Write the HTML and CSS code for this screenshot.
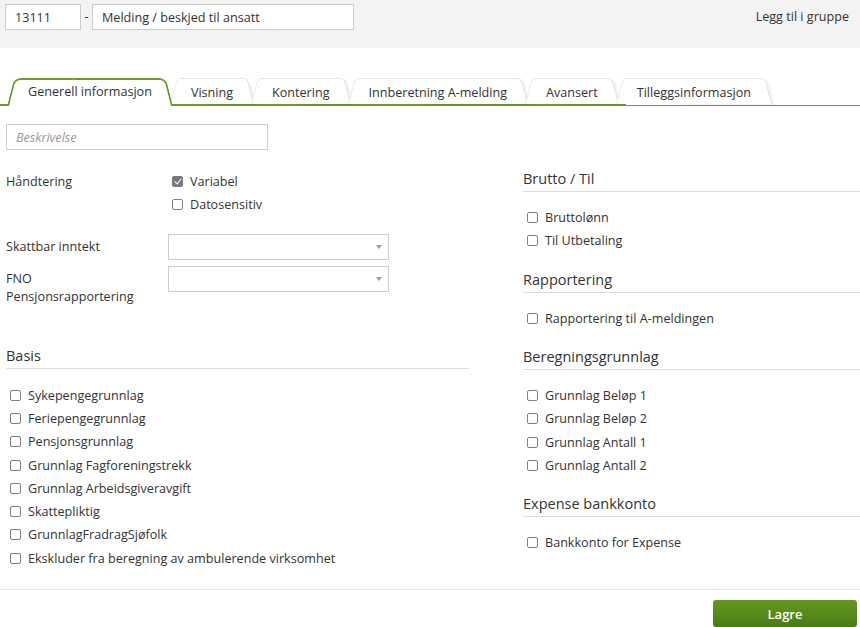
FILE: index.html
```html
<!DOCTYPE html>
<html lang="no">
<head>
    <meta charset="UTF-8">
    <meta name="viewport" content="width=device-width, initial-scale=1.0">
    <title>Lønnsart - Melding / beskjed til ansatt</title>
    <link rel="stylesheet" href="styles.css">
</head>
<body>
    <div class="header">
        <input class="text-input code-input" type="text" value="13111">
        <span class="dash">-</span>
        <input class="text-input name-input" type="text" value="Melding / beskjed til ansatt">
        <a class="group-link" href="#">Legg til i gruppe</a>
    </div>

    <div class="tabbar">
        <div class="tab active">Generell informasjon</div>
        <div class="tab">Visning</div>
        <div class="tab">Kontering</div>
        <div class="tab">Innberetning A-melding</div>
        <div class="tab">Avansert</div>
        <div class="tab">Tilleggsinformasjon</div>
    </div>

    <div class="content">
        <input class="text-input desc-input" type="text" placeholder="Beskrivelse">

        <div class="columns">
            <div class="col-left">
                <div class="field-row">
                    <div class="field-label">Håndtering</div>
                    <div class="check-list">
                        <label class="check"><span class="box checked"></span>Variabel</label>
                        <label class="check"><span class="box"></span>Datosensitiv</label>
                    </div>
                </div>

                <div class="field-row select-row first-select">
                    <div class="field-label">Skattbar inntekt</div>
                    <div class="select"><span class="arrow"></span></div>
                </div>
                <div class="field-row select-row">
                    <div class="field-label">FNO Pensjonsrapportering</div>
                    <div class="select"><span class="arrow"></span></div>
                </div>

                <div class="section basis">
                    <h3 class="section-title">Basis</h3>
                    <div class="check-list">
                        <label class="check"><span class="box"></span>Sykepengegrunnlag</label>
                        <label class="check"><span class="box"></span>Feriepengegrunnlag</label>
                        <label class="check"><span class="box"></span>Pensjonsgrunnlag</label>
                        <label class="check"><span class="box"></span>Grunnlag Fagforeningstrekk</label>
                        <label class="check"><span class="box"></span>Grunnlag Arbeidsgiveravgift</label>
                        <label class="check"><span class="box"></span>Skattepliktig</label>
                        <label class="check"><span class="box"></span>GrunnlagFradragSjøfolk</label>
                        <label class="check"><span class="box"></span>Ekskluder fra beregning av ambulerende virksomhet</label>
                    </div>
                </div>
            </div>

            <div class="col-right">
                <div class="section">
                    <h3 class="section-title">Brutto / Til</h3>
                    <div class="check-list">
                        <label class="check"><span class="box"></span>Bruttolønn</label>
                        <label class="check"><span class="box"></span>Til Utbetaling</label>
                    </div>
                </div>
                <div class="section">
                    <h3 class="section-title">Rapportering</h3>
                    <div class="check-list">
                        <label class="check"><span class="box"></span>Rapportering til A-meldingen</label>
                    </div>
                </div>
                <div class="section">
                    <h3 class="section-title">Beregningsgrunnlag</h3>
                    <div class="check-list">
                        <label class="check"><span class="box"></span>Grunnlag Beløp 1</label>
                        <label class="check"><span class="box"></span>Grunnlag Beløp 2</label>
                        <label class="check"><span class="box"></span>Grunnlag Antall 1</label>
                        <label class="check"><span class="box"></span>Grunnlag Antall 2</label>
                    </div>
                </div>
                <div class="section">
                    <h3 class="section-title">Expense bankkonto</h3>
                    <div class="check-list">
                        <label class="check"><span class="box"></span>Bankkonto for Expense</label>
                    </div>
                </div>
            </div>
        </div>
    </div>

    <div class="footer">
        <button class="save-btn">Lagre</button>
    </div>
</body>
</html>
```

FILE: styles.css
```css
body {
    margin: 0;
    padding: 0;
    font-family: "Open Sans", "Liberation Sans", sans-serif;
    font-size: 12.6px;
    color: #333;
    background-color: white;
    overflow: hidden;
}

.text-input {
    box-sizing: border-box;
    height: 26px;
    margin: 0;
    border: 1px solid #ccc;
    background-color: white;
    font-family: "Open Sans", sans-serif;
    font-size: 12.6px;
    color: #333;
    padding: 0 9px;
    outline: none;
}

.header {
    display: flex;
    align-items: flex-start;
    height: 48px;
    box-sizing: border-box;
    padding: 4px 11px 0 5px;
    background-color: #f3f3f3;
}

.code-input {
    width: 76px;
}

.dash {
    width: 11px;
    text-align: center;
    line-height: 26px;
}

.name-input {
    width: 262px;
}

.group-link {
    margin-left: auto;
    line-height: 26px;
    color: #333;
    text-decoration: none;
}

/* tabs */
.tabbar {
    display: flex;
    align-items: flex-start;
    height: 27px;
    margin-top: 30px;
    padding-left: 7px;
    border-bottom: 1px solid #6b9a2b;
    background: linear-gradient(#6b9a2b, #6b9a2b) no-repeat 0 100% / 626px 1px;
}

.tab {
    position: relative;
    z-index: 1;
    height: 26px;
    box-sizing: border-box;
    padding: 4px 21px 0;
    margin-right: -3px;
    line-height: 22px;
    white-space: nowrap;
    color: #333;
}

.tab::before,
.tab::after {
    content: '';
    position: absolute;
    top: 0;
    bottom: 0;
    width: 55%;
    z-index: -1;
    background-color: white;
    border-top: 1px solid #e6e6e6;
    transform-origin: bottom;
}

.tab::before {
    left: 0;
    border-left: 1px solid #e6e6e6;
    border-radius: 5px 0 0 0;
    transform: skewX(-14deg);
}

.tab::after {
    right: 0;
    border-right: 1px solid #dcdcdc;
    border-radius: 0 5px 0 0;
    transform: skewX(14deg);
    box-shadow: 2px 1px 2px rgba(0, 0, 0, 0.06);
}

.tab.active {
    z-index: 2;
    height: 28px;
    padding-top: 3px;
}

.tab.active::before,
.tab.active::after {
    border-top: 2px solid #6b9a2b;
    border-radius: 7px 0 0 0;
}

.tab.active::before {
    border-left: 2px solid #6b9a2b;
}

.tab.active::after {
    border-right: 2px solid #6b9a2b;
    border-radius: 0 7px 0 0;
    box-shadow: none;
}

/* form */
.content {
    padding-left: 6px;
}

.desc-input {
    display: block;
    width: 262px;
    margin-top: 18px;
}

.desc-input::placeholder {
    color: #999;
    font-style: italic;
}

.columns {
    display: grid;
    grid-template-columns: 463px 1fr;
    column-gap: 54px;
    margin-top: 20px;
}

.field-row {
    display: flex;
    align-items: flex-start;
}

.field-label {
    width: 150px;
    margin-right: 12px;
    line-height: 23.3px;
}

.select-row .field-label {
    padding-top: 4px;
    line-height: 18px;
}

.first-select {
    margin-top: 17.4px;
}

.select-row + .select-row {
    margin-top: 6px;
}

.select {
    display: flex;
    align-items: center;
    justify-content: flex-end;
    width: 221px;
    height: 26px;
    box-sizing: border-box;
    border: 1px solid #ccc;
    padding-right: 6px;
}

.arrow {
    width: 0;
    height: 0;
    border-left: 3px solid transparent;
    border-right: 3px solid transparent;
    border-top: 4px solid #999;
}

.check-list {
    display: flex;
    flex-direction: column;
}

.check {
    display: flex;
    align-items: center;
    height: 23.3px;
    margin-left: 4px;
    white-space: nowrap;
}

.box {
    width: 11px;
    height: 11px;
    box-sizing: border-box;
    border: 1px solid #808080;
    border-radius: 2px;
    margin-right: 7px;
    background-color: white;
    position: relative;
}

.box.checked {
    background-color: #7a7a7a;
    border-color: #7a7a7a;
}

.box.checked::after {
    content: '';
    position: absolute;
    left: 3px;
    top: 0px;
    width: 3px;
    height: 6px;
    border-right: 1.5px solid white;
    border-bottom: 1.5px solid white;
    transform: rotate(40deg);
}

.section-title {
    margin: 0;
    font-size: 14.5px;
    font-weight: normal;
    line-height: 18px;
    padding-bottom: 3px;
    border-bottom: 1px solid #ddd;
    color: #333;
}

.section .check-list {
    margin-top: 14px;
    margin-bottom: 18px;
}

.basis {
    margin-top: 41.5px;
}

.basis .check-list {
    margin-bottom: 0;
}

.footer {
    display: flex;
    justify-content: flex-end;
    margin-top: 17px;
    padding: 10px 3px 0 0;
    border-top: 1px solid #e5e5e5;
}

.save-btn {
    width: 144px;
    height: 27px;
    border: none;
    border-radius: 3px;
    background: linear-gradient(to bottom, #64981f, #4b7b16);
    color: white;
    font-family: "Open Sans", sans-serif;
    font-size: 13px;
    font-weight: 600;
    cursor: pointer;
}
```
